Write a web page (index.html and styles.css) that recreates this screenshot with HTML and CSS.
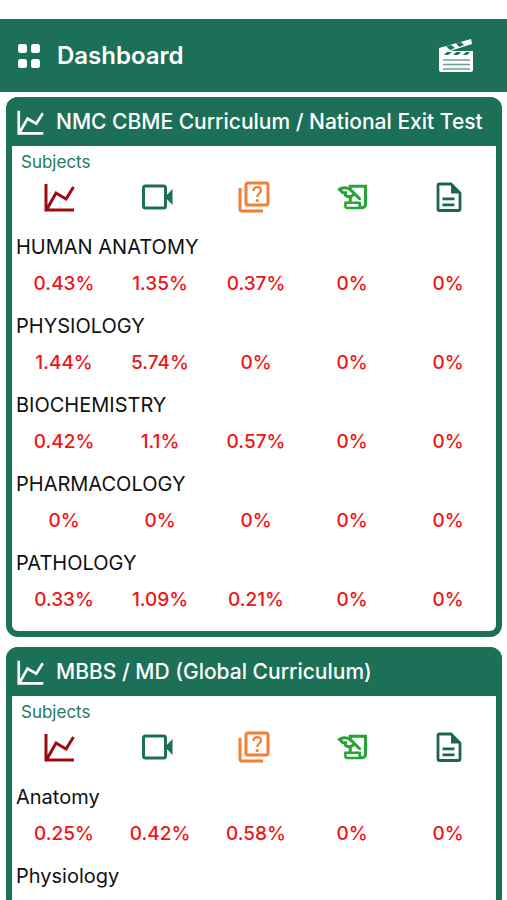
FILE: index.html
```html
<!DOCTYPE html>
<html lang="en">
<head>
  <meta charset="UTF-8" />
  <meta name="viewport" content="width=device-width, initial-scale=1.0" />
  <title>Dashboard</title>
  <link rel="stylesheet" href="styles.css">
</head>
<body>

  <!-- icons shared by both cards -->
  <svg class="sprite" aria-hidden="true">
    <symbol id="i-chart" viewBox="0 0 32 32">
      <path d="M2 3v26h28M3 28 12 12l10 6 7.500-12" fill="none" stroke="currentColor" stroke-width="3" />
    </symbol>
    <symbol id="i-video" viewBox="0 0 32 32">
      <rect x="2.500" y="5" width="22" height="22" rx="2" fill="none" stroke="currentColor" stroke-width="3" />
      <path d="M24 16 31.500 8v16z" fill="currentColor" />
    </symbol>
    <symbol id="i-quiz" viewBox="0 0 32 32">
      <rect x="8" y="2" width="22" height="22" rx="2" fill="none" stroke="currentColor" stroke-width="3" />
      <path d="M2 7v21q0 2 2 2h21" fill="none" stroke="currentColor" stroke-width="3" />
      <path d="M15.500 10c0-5 7.500-5 7.500-.5 0 3-3.800 3-3.800 6.500" fill="none" stroke="currentColor" stroke-width="2.200" />
      <circle cx="19.200" cy="19.500" r="1.600" fill="currentColor" />
    </symbol>
    <symbol id="i-story" viewBox="0 1.500 21 21">
      <path d="M9 4v1.380c-.83-.33-1.720-.5-2.610-.5-1.790 0-3.580.68-4.950 2.050l3.330 3.330h1.110v1.110c.86.860 1.980 1.310 3.110 1.360V15H6v3c0 1.100.9 2 2 2h10c1.660 0 3-1.340 3-3V4H9zm-1.110 6.410V8.260H5.610L4.570 7.220a5.070 5.070 0 0 1 1.820-.34c1.340 0 2.590.52 3.540 1.460l1.410 1.410-.2.200a2.700 2.700 0 0 1-1.920.8c-.47 0-.93-.12-1.330-.34zM19 17c0 .55-.45 1-1 1s-1-.45-1-1v-2h-6v-2.590c.57-.23 1.100-.57 1.560-1.030l.2-.2L15.590 14H17v-1.410l-6-5.970V6h8v11z" fill="currentColor" />
      <path d="M7.700 16.600h7.600V18.400H7.700z" fill="#fff" />
    </symbol>
    <symbol id="i-notes" viewBox="0 0 32 32">
      <path d="M7 3h12l9 9v16q0 1.500-1.500 1.500h-19Q6 29.500 6 28V4.500Q6 3 7.500 3z" fill="none" stroke="currentColor" stroke-width="2.800" />
      <path d="M19 3v9.500h9.500zM10.500 16.500h12v2.800h-12zM10.500 22.500h12v2.800h-12z" fill="currentColor" />
    </symbol>
  </svg>

  <header class="topbar">
    <button class="icon-btn" type="button" aria-label="Menu">
      <svg width="24" height="24" viewBox="0 0 24 24" fill="#fff">
        <rect x="1" y="0" width="9" height="9" rx="2.500" />
        <rect x="14" y="0" width="9" height="9" rx="2.500" />
        <rect x="1" y="15" width="9" height="9" rx="2.500" />
        <rect x="14" y="15" width="9" height="9" rx="2.500" />
      </svg>
    </button>
    <h1>Dashboard</h1>
    <button class="icon-btn" type="button" aria-label="Videos">
      <svg width="36" height="36" viewBox="0 0 36 36">
        <path d="M1 10 33 1l1 5-22 7h23v19q0 2-2 2H3q-2 0-2-2z" fill="#fff" />
        <path d="m8 8 5-1 4 3-5 2zM18 5l5-1 3 3-5 2zM9 14h5l-4 3H6zM18 14h5l-3 3h-5zM28 14h4l-3 3h-4z" fill="#1c7057" />
        <path d="M5 22h27M5 26.500h27M5 31h27" stroke="#6f9f8f" stroke-width="1.500" />
      </svg>
    </button>
  </header>

  <main>
    <section class="card">
      <h2><svg class="icon"><use href="#i-chart" /></svg>NMC CBME Curriculum / National Exit Test</h2>
      <table>
        <caption>Subjects</caption>
        <thead>
          <tr>
            <th aria-label="Progress"><svg class="icon progress"><use href="#i-chart" /></svg></th>
            <th aria-label="Videos"><svg class="icon video"><use href="#i-video" /></svg></th>
            <th aria-label="Quizzes"><svg class="icon quiz"><use href="#i-quiz" /></svg></th>
            <th aria-label="Stories"><svg class="icon story"><use href="#i-story" /></svg></th>
            <th aria-label="Notes"><svg class="icon notes"><use href="#i-notes" /></svg></th>
          </tr>
        </thead>
        <tbody>
          <tr><th colspan="5">HUMAN ANATOMY</th></tr>
          <tr><td>0.43%</td><td>1.35%</td><td>0.37%</td><td>0%</td><td>0%</td></tr>
          <tr><th colspan="5">PHYSIOLOGY</th></tr>
          <tr><td>1.44%</td><td>5.74%</td><td>0%</td><td>0%</td><td>0%</td></tr>
          <tr><th colspan="5">BIOCHEMISTRY</th></tr>
          <tr><td>0.42%</td><td>1.1%</td><td>0.57%</td><td>0%</td><td>0%</td></tr>
          <tr><th colspan="5">PHARMACOLOGY</th></tr>
          <tr><td>0%</td><td>0%</td><td>0%</td><td>0%</td><td>0%</td></tr>
          <tr><th colspan="5">PATHOLOGY</th></tr>
          <tr><td>0.33%</td><td>1.09%</td><td>0.21%</td><td>0%</td><td>0%</td></tr>
        </tbody>
      </table>
    </section>

    <section class="card">
      <h2><svg class="icon"><use href="#i-chart" /></svg>MBBS / MD (Global Curriculum)</h2>
      <table>
        <caption>Subjects</caption>
        <thead>
          <tr>
            <th aria-label="Progress"><svg class="icon progress"><use href="#i-chart" /></svg></th>
            <th aria-label="Videos"><svg class="icon video"><use href="#i-video" /></svg></th>
            <th aria-label="Quizzes"><svg class="icon quiz"><use href="#i-quiz" /></svg></th>
            <th aria-label="Stories"><svg class="icon story"><use href="#i-story" /></svg></th>
            <th aria-label="Notes"><svg class="icon notes"><use href="#i-notes" /></svg></th>
          </tr>
        </thead>
        <tbody>
          <tr><th colspan="5">Anatomy</th></tr>
          <tr><td>0.25%</td><td>0.42%</td><td>0.58%</td><td>0%</td><td>0%</td></tr>
          <tr><th colspan="5">Physiology</th></tr>
        </tbody>
      </table>
    </section>
  </main>

</body>
</html>
```

FILE: styles.css
```css
* {
  box-sizing: border-box;
}
body {
  margin: 0;
  padding-top: 19px;
  font-family: Inter, "Liberation Sans", sans-serif;
  background: #fff;
  color: #111;
}
.sprite {
  display: none;
}

/* top bar */
.topbar {
  display: flex;
  align-items: center;
  height: 73px;
  padding: 0 33px 0 17px;
  background: #1c7057;
  color: #fff;
}
.topbar h1 {
  flex: 1;
  margin: 0 0 0 16px;
  font-size: 24px;
  font-weight: 600;
}
.icon-btn {
  padding: 0;
  border: none;
  background: none;
  cursor: pointer;
}
.icon-btn svg {
  display: block;
}

/* cards */
main {
  display: flex;
  flex-direction: column;
  gap: 10px;
  padding: 5px 5px 0 6px;
}
.card {
  border: 6px solid #1c7057;
  border-top: none;
  border-radius: 12px;
  background: #fff;
}
.card h2 {
  display: flex;
  align-items: center;
  gap: 10px;
  height: 49px;
  margin: 0 -6px;
  padding-left: 10px;
  border-radius: 12px 12px 0 0;
  background: #1c7057;
  color: #fff;
  font-size: 21px;
  font-weight: 500;
  white-space: nowrap;
}
.icon {
  flex: none;
  display: block;
  width: 32px;
  height: 32px;
}
.card h2 .icon {
  width: 30px;
  height: 28px;
}

/* subjects table */
table, thead, tbody {
  display: block;
}
tr {
  display: grid;
  grid-template-columns: repeat(5, 1fr);
}
caption {
  display: block;
  padding-left: 9px;
  line-height: 32px;
  font-size: 17px;
  color: #1f7a5c;
  text-align: left;
}
thead th {
  display: flex;
  justify-content: center;
  padding: 3px 0;
}
tbody {
  padding: 11px 0 9px 4px;
}
tbody th {
  grid-column: 1 / -1;
  padding: 0;
  line-height: 40px;
  font-size: 20px;
  font-weight: 400;
  text-align: left;
}
td {
  padding: 0 0 5px;
  line-height: 34px;
  font-size: 19px;
  font-weight: 500;
  color: #f01414;
  text-align: center;
}
.progress {
  color: #9c0a12;
}
.video {
  color: #1c7057;
}
.quiz {
  color: #f47f32;
}
.story {
  color: #25a536;
}
.notes {
  color: #1c6650;
}
```
